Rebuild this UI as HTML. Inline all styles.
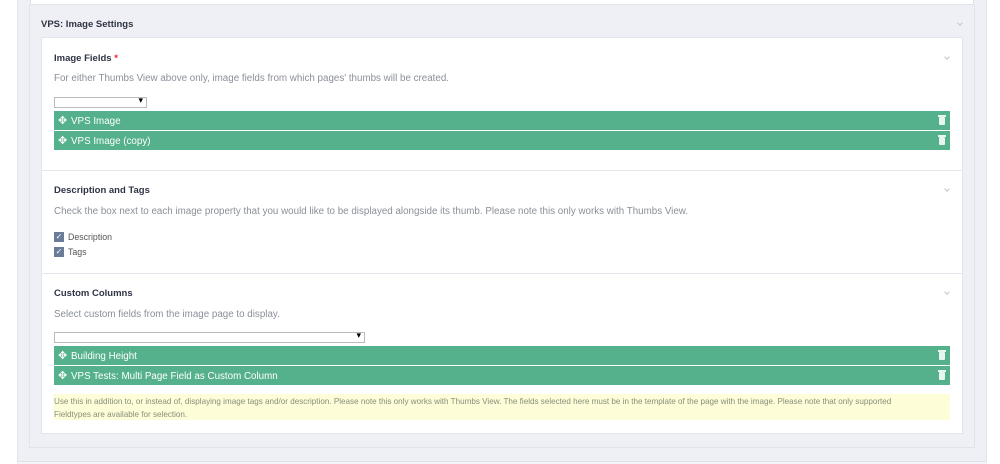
<!DOCTYPE html>
<html><head><style>
*{margin:0;padding:0;box-sizing:border-box}
body{width:1000px;height:464px;background:#fff;font-family:"Liberation Sans",sans-serif;position:relative;overflow:hidden}
.a{position:absolute}
.h{font-weight:bold;font-size:9.5px;color:#2f3444}
.d{font-size:9.8px;color:#8a8f99}
.g{position:absolute;left:54px;width:896px;height:19px;background:#55b18b;color:#fff;font-size:9.8px;line-height:21px;padding-left:17px}
.g .m{position:absolute;left:4px;top:0;font-size:11px;line-height:20px}
.g .t{position:absolute;right:5px;top:6px;width:6px;height:8px;background:#e8f6f0;border-radius:1px}
.g .t:before{content:"";position:absolute;left:-1px;top:-2px;width:8px;height:1.5px;background:#e8f6f0}
.sel{position:absolute;left:54px;height:11px;border:1px solid #bbb;background:#fff}
.sel:after{content:"▾";position:absolute;right:3px;top:-3px;font-size:9px;color:#000}
.sep{position:absolute;left:42px;width:920px;height:1px;background:#e5e7ee}
.chev{position:absolute;width:4px;height:4px;border-right:1px solid #c4c6cc;border-bottom:1px solid #c4c6cc;transform:rotate(45deg)}
.cb{position:absolute;left:54px;width:10px;height:10px;background:#6b7c9b;color:#fff;font-size:8px;line-height:10px;text-align:center}
</style></head><body>
<div class="a" style="left:17px;top:0;width:970px;height:464px;background:#eff0f5;border-left:1px solid #e3e5ec;border-right:1px solid #e3e5ec"></div>
<div class="a" style="left:17px;top:461px;width:970px;height:3px;border-top:1px solid #dfe1e8;background:#f3f4f7"></div>
<div class="a" style="left:30px;top:0;width:944px;height:5px;background:#fff;border:1px solid #e0e3ea;border-top:none"></div>
<div class="a" style="left:29px;top:5px;width:946px;height:443px;border:1px solid #e0e3ea;border-top:none"></div>
<div class="a h" style="left:41px;top:19px">VPS: Image Settings</div>
<div class="chev" style="left:958px;top:21px"></div>
<div class="a" style="left:41px;top:37px;width:922px;height:397px;background:#fff;border:1px solid #e3e5ec"></div>

<div class="a h" style="left:54px;top:53px">Image Fields <span style="color:#e23">*</span></div>
<div class="chev" style="left:945px;top:55px"></div>
<div class="a d" style="left:54px;top:73px">For either Thumbs View above only, image fields from which pages' thumbs will be created.</div>
<div class="sel" style="top:97px;width:93px"></div>
<div class="g" style="top:111px"><span class="m">✥</span>VPS Image<span class="t"></span></div>
<div class="g" style="top:131px"><span class="m">✥</span>VPS Image (copy)<span class="t"></span></div>
<div class="sep" style="top:170px"></div>

<div class="a h" style="left:54px;top:185px">Description and Tags</div>
<div class="chev" style="left:945px;top:187px"></div>
<div class="a d" style="left:54px;top:206px">Check the box next to each image property that you would like to be displayed alongside its thumb. Please note this only works with Thumbs View.</div>
<div class="cb" style="top:232px">✓</div><div class="a" style="left:68px;top:232px;font-size:8.8px;color:#555">Description</div>
<div class="cb" style="top:247px">✓</div><div class="a" style="left:68px;top:247px;font-size:8.8px;color:#555">Tags</div>
<div class="sep" style="top:273px"></div>

<div class="a h" style="left:54px;top:288px">Custom Columns</div>
<div class="chev" style="left:945px;top:290px"></div>
<div class="a d" style="left:54px;top:309px">Select custom fields from the image page to display.</div>
<div class="sel" style="top:332px;width:311px"></div>
<div class="g" style="top:346px"><span class="m">✥</span>Building Height<span class="t"></span></div>
<div class="g" style="top:366px"><span class="m">✥</span>VPS Tests: Multi Page Field as Custom Column<span class="t"></span></div>
<div class="a" style="left:54px;top:394px;width:896px;height:26px;background:#fdfed7;color:#8a8d7c;font-size:8.1px;line-height:13px;padding:1px 40px 0 0">Use this in addition to, or instead of, displaying image tags and/or description. Please note this only works with Thumbs View. The fields selected here must be in the template of the page with the image. Please note that only supported Fieldtypes are available for selection.</div>
</body></html>
